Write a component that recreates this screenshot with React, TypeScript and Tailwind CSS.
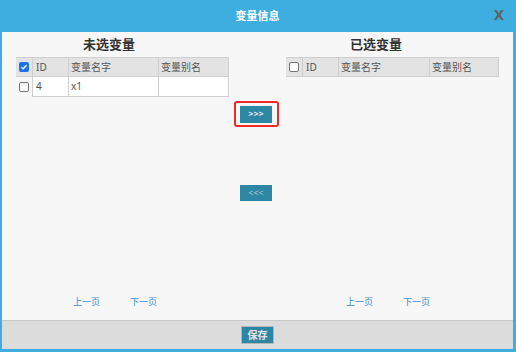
import React from "react";

/* ---------------- DATA ---------------- */

const unselected = [{ id: "4", name: "x1", alias: "" }];

const font = "font-['Noto_Sans','Noto_Sans_CJK_SC',sans-serif]";

/* ---------------- PIECES ---------------- */

function Box({ checked }: { checked?: boolean }) {
  if (checked) {
    return (
      <span className="flex h-[10px] w-[10px] items-center justify-center rounded-[2px] bg-[#1a73e8]">
        <svg width="8" height="8" viewBox="0 0 8 8">
          <path d="M1.5 4.2 L3.2 5.8 L6.6 2.2" fill="none" stroke="#fff" strokeWidth="1.4" />
        </svg>
      </span>
    );
  }
  return <span className="block h-[10px] w-[10px] rounded-[2px] border border-[#767676] bg-white" />;
}

function VarTable({
  rows,
  checked,
  widths,
}: {
  rows: { id: string; name: string; alias: string }[];
  checked?: boolean;
  widths: string[];
}) {
  return (
    <div className="text-[10px] text-[#555]">
      {/* HEADER ROW */}
      <div className="flex h-[20px] border-y border-[#cfcfcf] bg-[#e3e3e3]">
        <div className="flex w-[16px] items-center justify-center">
          <Box checked={checked} />
        </div>
        <div className={`${widths[0]} flex items-center border-x border-[#cfcfcf] pl-[3px]`}>ID</div>
        <div className={`${widths[1]} flex items-center border-r border-[#cfcfcf] pl-[2px]`}>变量名字</div>
        <div className="flex flex-1 items-center border-r border-[#cfcfcf] pl-[2px]">变量别名</div>
      </div>
      {/* DATA ROWS */}
      {rows.map((r) => (
        <div key={r.id} className="flex h-[20px]">
          <div className="flex w-[16px] items-center justify-center">
            <Box />
          </div>
          <div className="flex flex-1 border-b border-[#cfcfcf] bg-white">
            <div className={`${widths[0]} flex items-center border-x border-[#cfcfcf] pl-[3px]`}>{r.id}</div>
            <div className={`${widths[1]} flex items-center border-r border-[#cfcfcf] pl-[2px]`}>{r.name}</div>
            <div className="flex flex-1 items-center border-r border-[#cfcfcf] pl-[2px]">{r.alias}</div>
          </div>
        </div>
      ))}
    </div>
  );
}

function Pager({ pad }: { pad: string }) {
  return (
    <div className={`flex gap-[30px] ${pad} text-[9px] text-[#3a8ed0]`}>
      <span>上一页</span>
      <span>下一页</span>
    </div>
  );
}

/* ---------------- MAIN COMPONENT ---------------- */

export default function App() {
  return (
    <div className={`flex h-[352px] w-[516px] flex-col bg-[#3eaee1] pb-[3px] pl-[2px] pr-[3px] ${font}`}>
      {/* TITLE BAR */}
      <div className="relative flex h-[32px] items-center justify-center">
        <span className="text-[11px] font-bold text-white">变量信息</span>
        <span className="absolute right-[9px] top-[7px] text-[15px] font-bold leading-none text-[#606060]">X</span>
      </div>

      {/* BODY */}
      <div className="flex flex-1 bg-[#f7f7f7] pl-[14px]">
        {/* LEFT PANEL */}
        <div className="flex w-[213px] flex-col">
          <div className="flex h-[25px] items-center pl-[67px] text-[13px] font-bold text-[#333]">未选变量</div>
          <VarTable rows={unselected} checked widths={["w-[37px]", "w-[90px]"]} />
          <div className="mt-auto pb-[12px]">
            <Pager pad="pl-[57px]" />
          </div>
        </div>

        {/* MIDDLE BUTTONS */}
        <div className="flex w-[57px] flex-col items-center pr-[3px]">
          <div className="mt-[69px] flex h-[26px] w-[45px] items-center justify-center rounded-[3px] border-2 border-[#ee2a2a]">
            <button className="flex h-[17px] w-[32px] items-center justify-center bg-[#2c86a4] text-[9px] font-bold text-[#e8e8e8]">
              &gt;&gt;&gt;
            </button>
          </div>
          <button className="mt-[58px] flex h-[16px] w-[32px] items-center justify-center bg-[#2c86a4] text-[9px] text-[#a9c8d4]">
            &lt;&lt;&lt;
          </button>
        </div>

        {/* RIGHT PANEL */}
        <div className="flex w-[213px] flex-col">
          <div className="flex h-[25px] items-center pl-[64px] text-[13px] font-bold text-[#333]">已选变量</div>
          <VarTable rows={[]} widths={["w-[37px]", "w-[91px]"]} />
          <div className="mt-auto pb-[12px]">
            <Pager pad="pl-[60px]" />
          </div>
        </div>
      </div>

      {/* FOOTER */}
      <div className="flex h-[29px] items-center justify-center border-t border-[#c8c8c8] bg-[#dcdcdc]">
        <button className="flex h-[18px] w-[33px] items-center justify-center border border-[#b5b5b5] bg-[#2c86a4] text-[10px] font-bold text-[#e6e6e6]">
          保存
        </button>
      </div>
    </div>
  );
}
